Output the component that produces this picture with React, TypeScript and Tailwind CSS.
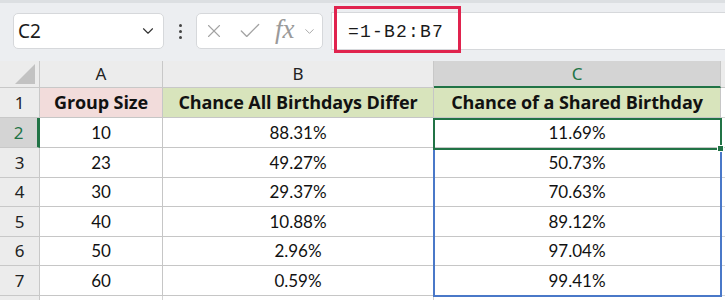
import { ChevronDown, X, Check } from "lucide-react";

const rows = [
  { n: 2, a: "10", b: "88.31%", c: "11.69%", h: "h-[30px]" },
  { n: 3, a: "23", b: "49.27%", c: "50.73%", h: "h-[30px]" },
  { n: 4, a: "30", b: "29.37%", c: "70.63%", h: "h-[29px]" },
  { n: 5, a: "40", b: "10.88%", c: "89.12%", h: "h-[30px]" },
  { n: 6, a: "50", b: "2.96%", c: "97.04%", h: "h-[29px]" },
  { n: 7, a: "60", b: "0.59%", c: "99.41%", h: "h-[30px]" },
];

const cellFont = "font-['Lato',sans-serif] text-[17px] text-[#111]";
const titleFont = "font-['Open_Sans',sans-serif] text-[18px] font-bold text-[#111] tracking-[-0.1px]";
const headFont = "font-['Noto_Sans',sans-serif] text-[17px]";

const App = () => {
  return (
    <div className="w-[725px] h-[300px] overflow-hidden bg-white">
      {/* Formula toolbar */}
      <div className="h-[61px] bg-[#eceef1] border-t-[3px] border-[#dcdfe2] flex items-start pt-[10px]">
        <div className="ml-[13px] w-[151px] h-[36px] bg-white border border-[#d6d8db] rounded-[5px] flex items-center justify-between pl-[4px] pr-[6px]">
          <span className="font-['Noto_Sans',sans-serif] text-[19px] text-[#1a1a1a]">C2</span>
          <ChevronDown size={18} strokeWidth={1.5} className="text-[#333]" />
        </div>
        <div className="w-[32px] h-[36px] flex flex-col items-center justify-center gap-[3px]">
          <span className="w-[3px] h-[3px] bg-[#444] rounded-full" />
          <span className="w-[3px] h-[3px] bg-[#444] rounded-full" />
          <span className="w-[3px] h-[3px] bg-[#444] rounded-full" />
        </div>
        <div className="w-[127px] h-[36px] bg-white border border-[#d6d8db] rounded-[5px] flex items-center pl-[6px] gap-[12px] text-[#a3a3a3]">
          <X size={22} strokeWidth={1.2} />
          <Check size={26} strokeWidth={1.2} />
          <span className="font-['Liberation_Serif',serif] italic text-[27px] leading-none text-[#9a9a9a] -mt-[4px]">
            fx
          </span>
          <ChevronDown size={15} strokeWidth={1.5} className="-ml-[5px]" />
        </div>
        <div className="ml-[8px] flex-1 h-[38px] -mt-[1px] bg-white border-y border-l border-[#d6d8db] relative">
          <div className="absolute left-[2px] -top-[7px] w-[127px] h-[47px] border-[3px] border-[#e0234e]" />
          <span className="absolute left-[16px] top-[6px] font-['Liberation_Mono',monospace] text-[18px] tracking-[1.2px] text-[#1a1a1a]">
            =1-B2:B7
          </span>
        </div>
      </div>

      {/* Grid */}
      <div className="relative">
        {/* column headers */}
        <div className={`flex h-[27px] ${headFont}`}>
          <div className="w-[40px] bg-[#ececec] border-r border-b border-[#c8c8c8] relative">
            <svg className="absolute right-[4px] bottom-[3px]" width="20" height="20" viewBox="0 0 20 20">
              <polygon points="20,0 20,20 0,20" fill="#c2c2c2" />
            </svg>
          </div>
          <div className="w-[123px] bg-[#ececec] border-r border-b border-[#c8c8c8] flex items-center justify-center text-[#222]">A</div>
          <div className="w-[271px] bg-[#ececec] border-r border-b border-[#c8c8c8] flex items-center justify-center text-[#222]">B</div>
          <div className="w-[287px] bg-[#d4d4d4] border-r border-[#c8c8c8] border-b-2 border-b-[#217346] flex items-center justify-center text-[#217346]">C</div>
          <div className="flex-1 bg-[#ececec] border-b border-[#c8c8c8]" />
        </div>

        {/* row 1 */}
        <div className={`flex h-[30px] ${titleFont}`}>
          <div className={`w-[40px] bg-[#ececec] border-r border-b border-[#c8c8c8] flex items-center justify-center ${headFont} font-normal text-[#222]`}>1</div>
          <div className="w-[123px] bg-[#f2dcdb] border-r border-b border-[#c6c6c6] flex items-center justify-center whitespace-nowrap">Group Size</div>
          <div className="w-[271px] bg-[#d8e4bc] border-r border-b border-[#c6c6c6] flex items-center justify-center whitespace-nowrap">Chance All Birthdays Differ</div>
          <div className="w-[287px] bg-[#d8e4bc] border-r border-b border-[#c6c6c6] flex items-center justify-center whitespace-nowrap">Chance of a Shared Birthday</div>
          <div className="flex-1 border-b border-[#d4d4d4]" />
        </div>

        {rows.map((r) => {
          const active = r.n === 2;
          return (
            <div key={r.n} className={`flex ${r.h} ${cellFont}`}>
              <div
                className={`w-[40px] border-b border-[#c8c8c8] flex items-center justify-center ${headFont} ${
                  active
                    ? "bg-[#d4d4d4] text-[#217346] border-r-[3px] border-r-[#217346]"
                    : "bg-[#ececec] text-[#222] border-r border-r-[#c8c8c8]"
                }`}
              >
                {r.n}
              </div>
              <div className="w-[123px] border-r border-b border-[#c6c6c6] flex items-center justify-center">{r.a}</div>
              <div className="w-[271px] border-r border-b border-[#c6c6c6] flex items-center justify-center">{r.b}</div>
              <div className="w-[287px] border-r border-b border-[#c6c6c6] flex items-center justify-center">{r.c}</div>
              <div className="flex-1 border-b border-[#d4d4d4]" />
            </div>
          );
        })}

        <div className="flex h-[10px]">
          <div className="w-[40px] bg-[#ececec] border-r border-[#c8c8c8]" />
          <div className="w-[123px] border-r border-[#d4d4d4]" />
          <div className="w-[271px] border-r border-[#d4d4d4]" />
        </div>

        {/* selected range C2:C7 */}
        <div className="absolute left-[433px] top-[57px] w-[289px] h-[179px] border-2 border-[#4a78c8]" />
        {/* active cell C2 */}
        <div className="absolute left-[433px] top-[57px] w-[289px] h-[32px] border-2 border-[#217346]" />
        {/* fill handle */}
        <div className="absolute left-[717px] top-[84px] w-[7px] h-[7px] bg-[#217346] border border-white" />
      </div>
    </div>
  );
};

export default App;
